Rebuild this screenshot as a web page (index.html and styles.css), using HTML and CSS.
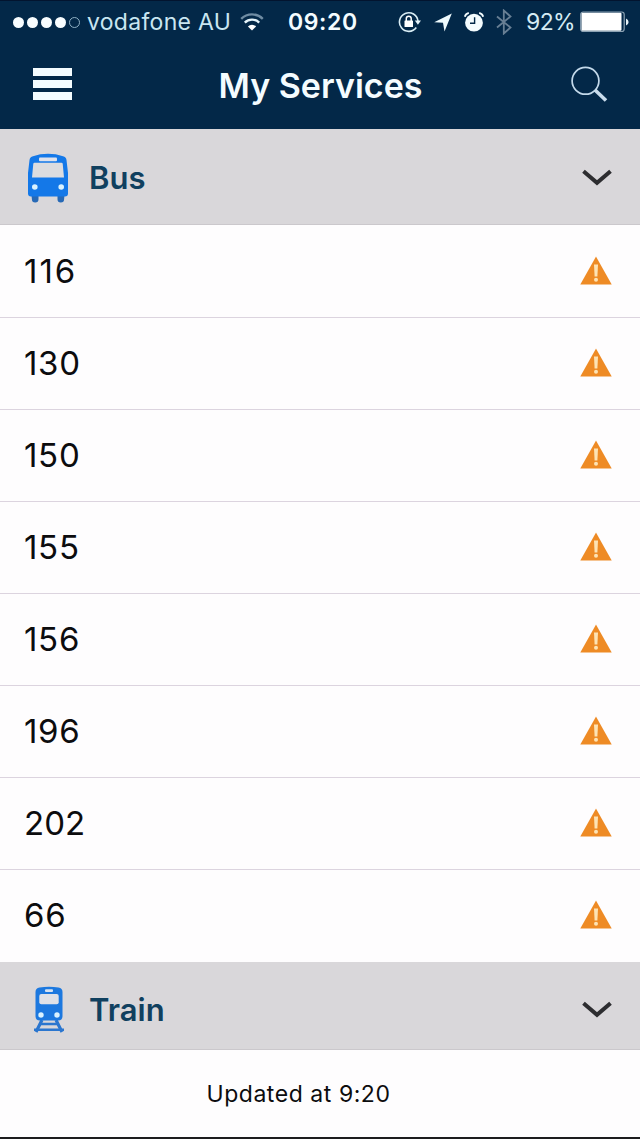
FILE: index.html
```html
<!DOCTYPE html>
<html lang="en">
<head>
<meta charset="UTF-8">
<meta name="viewport" content="width=device-width, initial-scale=1.0">
<title>My Services</title>
<link rel="stylesheet" href="styles.css">
</head>
<body>
<svg class="symbols" width="0" height="0">
  <symbol id="warning" viewBox="0 0 32 29">
    <path d="M16 .5 31.700 28.500H.3z" fill="#ee8b25"/>
    <path d="M14 8.500h4l-.6 12h-2.800z" fill="#fde3b4"/>
    <circle cx="16" cy="23.800" r="2" fill="#fde3b4"/>
  </symbol>
  <symbol id="chevron" viewBox="0 0 30 18">
    <path d="M1.500 2.200 15 13.800 28.500 2.200" fill="none" stroke="#2d2d30" stroke-width="4"/>
  </symbol>
</svg>

<header class="header">
  <div class="status-bar">
    <div class="signal">
      <span class="dot"></span><span class="dot"></span><span class="dot"></span><span class="dot"></span><span class="dot empty"></span>
    </div>
    <span class="carrier">vodafone AU</span>
    <svg class="wifi" width="24" height="18" viewBox="0 0 24 18">
      <g fill="none" stroke-width="2.400">
        <path d="M1.200 5.800a15.500 15.500 0 0 1 21.600 0" stroke="#6f8ca3"/>
        <path d="M4.800 9.600a10.300 10.300 0 0 1 14.400 0" stroke="#e6f4fa"/>
      </g>
      <path d="M12 17.600 7.900 13.400a5.900 5.900 0 0 1 8.200 0z" fill="#fff"/>
    </svg>
    <span class="time">09:20</span>
    <svg class="lock" width="24" height="22" viewBox="0 0 24 22">
      <path d="M18.300 16.500A9.300 9.300 0 1 1 20 10" fill="none" stroke="#d9edf5" stroke-width="1.600"/>
      <path d="M16.800 9.600h6.200l-3.100 4.200z" fill="#e6f4fa"/>
      <rect x="6.500" y="9.500" width="8.500" height="6.500" rx=".6" fill="#fff"/>
      <path d="M8.300 10V7.600a2.450 2.450 0 0 1 4.900 0V10" fill="none" stroke="#fff" stroke-width="1.500"/>
    </svg>
    <svg class="location" width="18" height="19" viewBox="0 0 18 19">
      <path d="M17.800.4 10.500 18.400 9 9.800.2 9.300z" fill="#eefafd"/>
    </svg>
    <svg class="alarm" width="20" height="20" viewBox="0 0 20 20">
      <circle cx="10" cy="10.700" r="8.900" fill="#f4fcfe"/>
      <path d="M.8 4.800Q1.500 1.800 4.800.9M19.200 4.800Q18.500 1.800 15.200.9" fill="none" stroke="#f4fcfe" stroke-width="1.800"/>
      <path d="M10.600 5.200v6.100H6" fill="none" stroke="#032848" stroke-width="1.400"/>
    </svg>
    <svg class="bluetooth" width="16" height="26" viewBox="0 0 16 26">
      <path d="M1 7.500 14.500 18.500 7.800 24.500V1.500L14.500 7.500 1 18.500" fill="none" stroke="#687f94" stroke-width="1.800"/>
    </svg>
    <span class="percent">92%</span>
    <svg class="battery" width="49" height="22" viewBox="0 0 49 22">
      <rect x=".7" y="1" width="43.500" height="19.500" rx="2.500" fill="none" stroke="#8ca2b3" stroke-width="1.200"/>
      <rect x="1.500" y="1.800" width="40" height="18" rx="1" fill="#fff"/>
      <path d="M46 7.500q2.600 1 2.600 3.500T46 14.500z" fill="#e6f1f6"/>
    </svg>
  </div>
  <div class="nav-bar">
    <div class="menu">
      <span></span>
      <span></span>
      <span></span>
    </div>
    <h1 class="title">My Services</h1>
    <svg class="search" width="37" height="37" viewBox="0 0 37 37">
      <circle cx="14.500" cy="14.800" r="13.400" fill="none" stroke="#c3d9ea" stroke-width="1.700"/>
      <path d="M24 24 35 34.500" stroke="#c9dcec" stroke-width="3.600"/>
    </svg>
  </div>
</header>

<section class="group bus">
  <svg class="group-icon" width="42" height="50" viewBox="0 0 42 50">
    <path d="M4.500 42h7v4.200a3.300 3.300 0 0 1-6.600 0zM30.500 42h7l-.4 4.200a3.300 3.300 0 0 1-6.600 0z" fill="#2769b6"/>
    <path d="M1 20 2.500 7Q3 3.800 6 3.200 13 .8 21 .8t15 2.400q3 .6 3.500 3.800L41 20v20.500q0 3-3 3H4q-3 0-3-3z" fill="#1478e8"/>
    <rect x="12" y="4.600" width="18" height="3.600" rx="1" fill="#dfe2ec"/>
    <path d="M7.500 9.800h27q1 0 1.200 1L37 24.500H5L6.300 10.800q.2-1 1.200-1z" fill="#dcdcdf"/>
    <circle cx="7.800" cy="34" r="2.800" fill="#d9f2ff"/>
    <circle cx="34.200" cy="34" r="2.800" fill="#d9f2ff"/>
  </svg>
  <h2 class="group-name">Bus</h2>
  <svg class="chevron" width="30" height="18"><use href="#chevron"/></svg>
</section>

<ul class="services">
  <li><span class="wide">116</span><svg width="32" height="29"><use href="#warning"/></svg></li>
  <li><span>130</span><svg width="32" height="29"><use href="#warning"/></svg></li>
  <li><span>150</span><svg width="32" height="29"><use href="#warning"/></svg></li>
  <li><span>155</span><svg width="32" height="29"><use href="#warning"/></svg></li>
  <li><span>156</span><svg width="32" height="29"><use href="#warning"/></svg></li>
  <li><span>196</span><svg width="32" height="29"><use href="#warning"/></svg></li>
  <li><span class="narrow">202</span><svg width="32" height="29"><use href="#warning"/></svg></li>
  <li><span>66</span><svg width="32" height="29"><use href="#warning"/></svg></li>
</ul>

<section class="group train">
  <svg class="group-icon" width="42" height="48" viewBox="0 0 42 48">
    <path d="M15 34 9 46M29 34l6 12" stroke="#2b76cf" stroke-width="3.200"/>
    <path d="M13 38h18M7 43.800h30" stroke="#2b76cf" stroke-width="2.600"/>
    <path d="M12.500 1.500Q22 0 31.500 1.500 35.500 2 35.500 6v24q0 4.500-4.500 4.500H13q-4.500 0-4.500-4.500V6q0-4 4-4.500z" fill="#1c78df"/>
    <rect x="18" y="3.300" width="8" height="2.600" rx="1" fill="#d5e2f2"/>
    <rect x="12.300" y="8" width="19.400" height="10.300" rx="2" fill="#dfe1e7"/>
    <circle cx="14" cy="29" r="2.700" fill="#d9f2ff"/>
    <circle cx="30" cy="29" r="2.700" fill="#d9f2ff"/>
  </svg>
  <h2 class="group-name">Train</h2>
  <svg class="chevron" width="30" height="18"><use href="#chevron"/></svg>
</section>

<footer class="updated">Updated at 9:20</footer>
</body>
</html>
```
FILE: styles.css
```css
* {
    box-sizing: border-box;
}

body {
    margin: 0;
    width: 640px;
    background-color: #fefdfe;
    font-family: Inter, "Liberation Sans", sans-serif;
    color: #0c0c0e;
}

svg {
    display: block;
    flex: none;
}

.symbols {
    display: none;
}

/* Header */
.header {
    height: 129px;
    background-color: #032848;
    border-top: 1px solid #02142f;
    color: #f4fcff;
}

.status-bar {
    display: flex;
    align-items: center;
    height: 42px;
    padding-left: 13px;
    white-space: nowrap;
}

.signal {
    display: flex;
    gap: 3px;
}

.dot {
    width: 11px;
    height: 11px;
    border-radius: 50%;
    background-color: #f8fdff;
}

.dot.empty {
    background: none;
    border: 1px solid #8fb0c4;
}

.carrier {
    width: 144px;
    margin-left: 7px;
    font-size: 23px;
    letter-spacing: 0.3px;
    color: #c9e6f1;
}

.wifi {
    margin-left: 9px;
}

.time {
    width: 71px;
    margin-left: 24px;
    font-size: 23px;
    font-weight: 600;
    letter-spacing: 0.6px;
}

.lock {
    margin-left: 39px;
}

.location {
    margin-left: 12px;
}

.alarm {
    margin-left: 12px;
}

.bluetooth {
    margin-left: 12px;
}

.percent {
    width: 48px;
    margin-left: 14px;
    font-size: 23px;
    letter-spacing: -0.6px;
    color: #d5ebf4;
}

.battery {
    margin-left: 6px;
}

.nav-bar {
    display: flex;
    align-items: center;
    justify-content: space-between;
    height: 82px;
    padding: 0 32px 0 33px;
}

.menu {
    display: grid;
    gap: 4px;
    width: 39px;
}

.menu span {
    height: 8px;
    background-color: #f4fcff;
}

.title {
    margin: 3px 2px 0 0;
    font-size: 34px;
    font-weight: 600;
    white-space: nowrap;
}

/* Group bars */
.group {
    display: flex;
    align-items: center;
    background-color: #d9d7da;
    padding: 2px 28px 0 27px;
}

.bus {
    height: 96px;
    border-bottom: 1px solid #cbc8cc;
}

.train {
    height: 88px;
    padding-top: 8px;
    border-bottom: 1px solid #cbc8cc;
}

.group-name {
    margin: 0 auto 0 20px;
    font-size: 31px;
    font-weight: 600;
    color: #10405f;
}

/* Service rows */
.services {
    margin: 0;
    padding: 0;
    list-style: none;
}

.services li {
    display: flex;
    align-items: center;
    justify-content: space-between;
    height: 92px;
    padding: 0 28px 1px 24px;
    border-bottom: 1px solid #dcd4df;
    font-size: 33px;
    font-kerning: none;
    letter-spacing: 0.7px;
}

.services .wide {
    letter-spacing: 2px;
}

.services .narrow {
    letter-spacing: 0;
}

.services li:first-child {
    height: 93px;
}

.services li:last-child {
    padding-bottom: 2px;
    border-bottom: none;
}

.services li:not(:first-child) svg {
    margin-bottom: 2px;
}

.updated {
    height: 89px;
    padding-right: 43px;
    border-bottom: 2px solid #1c1c1e;
    font-size: 23px;
    letter-spacing: 0.55px;
    line-height: 89px;
    text-align: center;
}
```
